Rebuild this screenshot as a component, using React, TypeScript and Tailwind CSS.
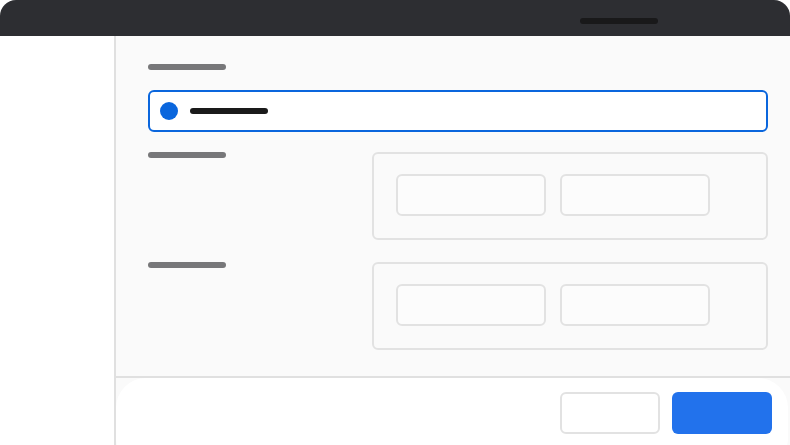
const Bar = ({ className }: { className: string }) => (
  <div className={`h-[6px] w-[78px] rounded-full ${className}`} />
);

const Section = () => (
  <div className="flex items-start">
    <div className="w-[224px] shrink-0">
      <Bar className="bg-[#777779]" />
    </div>
    <div className="flex h-[88px] flex-1 items-start gap-[14px] rounded-md border-2 border-[#e2e2e2] px-[22px] pt-[20px]">
      <div className="h-[42px] w-[150px] rounded-md border-2 border-[#e2e2e2] bg-[#fcfcfc]" />
      <div className="h-[42px] w-[150px] rounded-md border-2 border-[#e2e2e2] bg-[#fcfcfc]" />
    </div>
  </div>
);

export default function App() {
  return (
    <div className="flex h-[445px] w-[790px] flex-col overflow-hidden bg-white">
      <div className="flex h-9 shrink-0 items-start rounded-t-2xl bg-[#2d2e32] pl-[580px] pt-[18px]">
        <div className="h-[6px] w-[78px] rounded-full bg-[#19191a]" />
      </div>
      <div className="flex flex-1">
        <div className="w-[116px] shrink-0 border-r-2 border-[#e0e0e0] bg-white" />
        <div className="flex flex-1 flex-col">
          <div className="flex h-[340px] flex-col bg-[#fafafa] pl-8 pr-[22px] pt-7">
            <Bar className="bg-[#777779]" />
            <div className="mt-5 flex h-[42px] items-center gap-3 rounded-md border-2 border-[#0a66dd] bg-white pl-[10px]">
              <div className="h-[18px] w-[18px] rounded-full bg-[#0a66dd]" />
              <Bar className="bg-[#1a1a1a]" />
            </div>
            <div className="mt-5">
              <Section />
            </div>
            <div className="mt-[22px]">
              <Section />
            </div>
          </div>
          <div className="flex-1 border-t-2 border-[#e0e0e0] bg-[#fafafa] pr-[2px]">
            <div className="flex h-[90px] items-start justify-end gap-3 rounded-[30px] bg-white pr-4 pt-[14px]">
              <div className="h-[42px] w-[100px] rounded-md border-2 border-[#e2e2e2] bg-white" />
              <div className="h-[42px] w-[100px] rounded-md bg-[#2272ec]" />
            </div>
          </div>
        </div>
      </div>
    </div>
  );
}
